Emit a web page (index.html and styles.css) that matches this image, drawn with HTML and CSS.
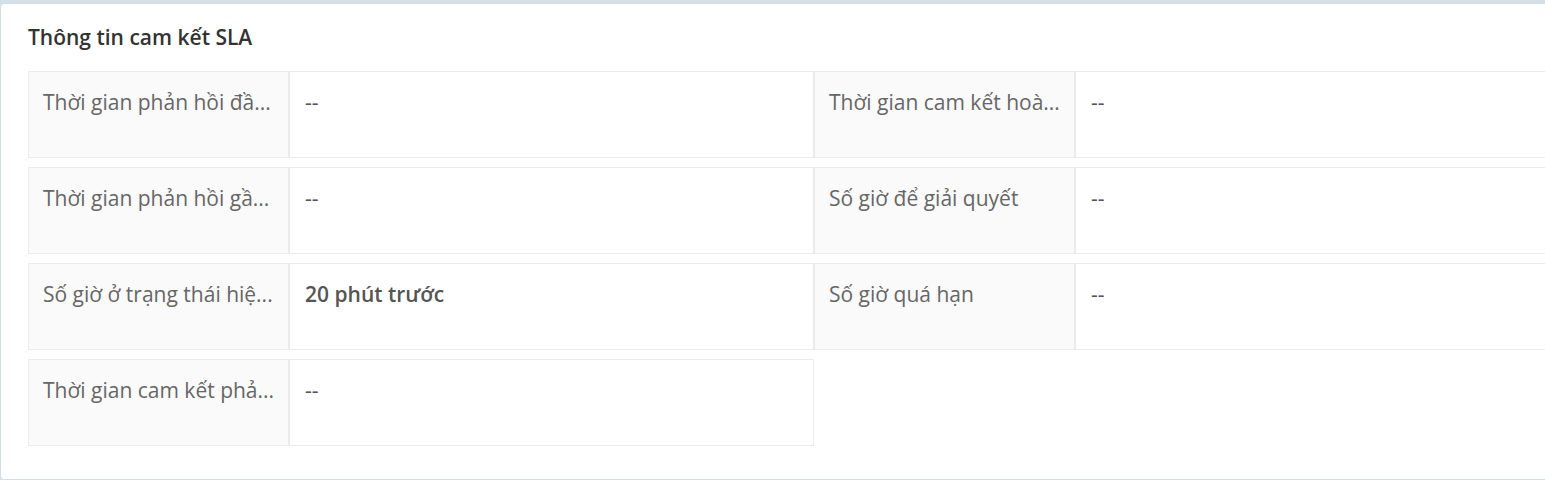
FILE: index.html
```
<!DOCTYPE html>
<html lang="vi">
  <head>
    <meta charset="UTF-8" />
    <meta name="viewport" content="width=device-width, initial-scale=1.0" />
    <title>Thông tin cam kết SLA</title>
    <link rel="stylesheet" href="styles.css">
  </head>
  <body>
    <div class="card">
      <h3 class="cardTitle">Thông tin cam kết SLA</h3>

      <div class="fieldGrid">
        <div class="field">
          <div class="fieldLabel" title="Thời gian phản hồi đầu tiên">Thời gian phản hồi đầ...</div>
          <div class="fieldValue">--</div>
        </div>
        <div class="field">
          <div class="fieldLabel" title="Thời gian cam kết hoàn thành">Thời gian cam kết hoà...</div>
          <div class="fieldValue">--</div>
        </div>

        <div class="field">
          <div class="fieldLabel" title="Thời gian phản hồi gần nhất">Thời gian phản hồi gầ...</div>
          <div class="fieldValue">--</div>
        </div>
        <div class="field">
          <div class="fieldLabel">Số giờ để giải quyết</div>
          <div class="fieldValue">--</div>
        </div>

        <div class="field">
          <div class="fieldLabel" title="Số giờ ở trạng thái hiện tại">Số giờ ở trạng thái hiệ...</div>
          <div class="fieldValue strong">20 phút trước</div>
        </div>
        <div class="field">
          <div class="fieldLabel">Số giờ quá hạn</div>
          <div class="fieldValue">--</div>
        </div>

        <div class="field">
          <div class="fieldLabel" title="Thời gian cam kết phản hồi">Thời gian cam kết phả...</div>
          <div class="fieldValue">--</div>
        </div>
      </div>
    </div>
  </body>
</html>
```

FILE: styles.css
```
body {
  margin: 0;
  background: #d5dfe7;
  font-family: "Open Sans", "Liberation Sans", sans-serif;
  overflow: hidden;
}

.card {
  margin-top: 3px;
  width: 1640px;
  height: 477px;
  box-sizing: border-box;
  padding: 18px 27px 0;
  background: #fff;
  border: 1px solid #d3dde6;
  border-radius: 4px;
}

.cardTitle {
  margin: 0 0 19px;
  font-size: 21px;
  font-weight: 600;
  line-height: 30px;
  color: #333;
}

.fieldGrid {
  display: grid;
  grid-template-columns: 786px 786px;
  row-gap: 9px;
}

.field {
  display: flex;
  height: 87px;
  box-sizing: border-box;
  border: 1px solid #ebebeb;
}

.fieldLabel {
  width: 261px;
  flex-shrink: 0;
  box-sizing: border-box;
  padding: 15px 12px 0 14px;
  background: #fafafa;
  border-right: 2px solid #ebebeb;
  font-size: 21px;
  line-height: 30px;
  color: #666;
  white-space: nowrap;
  overflow: hidden;
  text-overflow: ellipsis;
}

.fieldValue {
  flex: 1;
  padding: 15px 15px 0;
  font-size: 21px;
  line-height: 30px;
  color: #555;
}

.fieldValue.strong {
  font-weight: 600;
}
```
